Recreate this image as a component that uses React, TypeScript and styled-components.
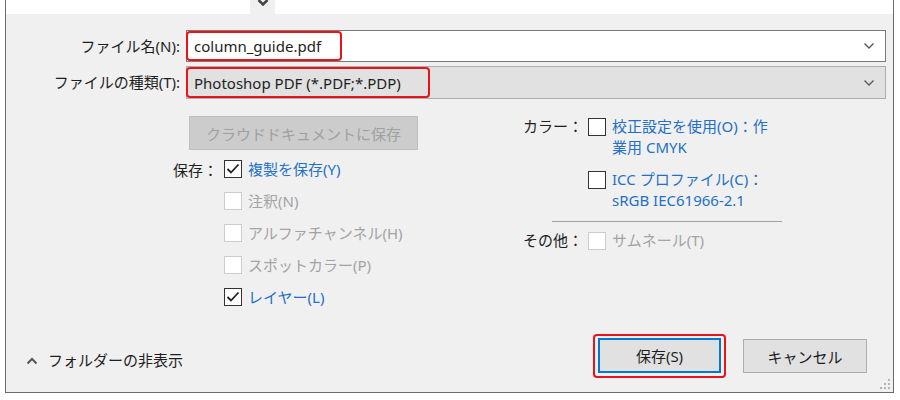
import React from 'react';
import styled, { createGlobalStyle } from 'styled-components';

const GlobalStyle = createGlobalStyle`
    html, body {
        margin: 0;
        padding: 0;
        background: #ffffff;
    }
    body {
        font-family: "Noto Sans", "Noto Sans CJK JP", sans-serif;
        font-size: 15px;
        color: #1e1e1e;
    }
`;

const Window = styled.div`
    position: relative;
    box-sizing: border-box;
    display: flex;
    flex-direction: column;
    margin-left: 5px;
    width: 889px;
    height: 393px;
    background: #f0f0f0;
    border: 1px solid #6a6a6a;
    border-top: none;
`;

const TopStrip = styled.div`
    display: flex;
    height: 14px;
`;

const WhitePane = styled.div<{ $width?: number }>`
    background: #ffffff;
    ${(p) => (p.$width ? `width: ${p.$width}px;` : 'flex: 1;')}
`;

const SortTab = styled.div`
    width: 25px;
    display: flex;
    justify-content: center;
    background: #f0f0f0;
`;

const FormGrid = styled.div`
    display: grid;
    grid-template-columns: 174px 1fr;
    column-gap: 6px;
    row-gap: 4px;
    margin-top: 16px;
    padding-right: 7px;
`;

const FieldLabel = styled.label`
    display: flex;
    align-items: center;
    justify-content: flex-end;
    line-height: 1;
    white-space: nowrap;
`;

const Combo = styled.div<{ $readonly?: boolean }>`
    position: relative;
    box-sizing: border-box;
    display: flex;
    align-items: center;
    height: ${(p) => (p.$readonly ? 33 : 32)}px;
    padding: 0 10px 0 7px;
    background: ${(p) => (p.$readonly ? '#e1e1e1' : '#ffffff')};
    border: 1px solid ${(p) => (p.$readonly ? '#adadad' : '#7a7a7a')};
    white-space: nowrap;
`;

const ComboText = styled.span`
    flex: 1;
`;

const Highlight = styled.div<{ $width: number }>`
    position: absolute;
    box-sizing: border-box;
    left: -1px;
    top: 0;
    bottom: 0;
    width: ${(p) => p.$width}px;
    border: 2.5px solid #e8141c;
    border-radius: 4px;
    pointer-events: none;
`;

const Options = styled.div`
    display: flex;
    margin-top: 17px;
`;

const LeftColumn = styled.div`
    width: 494px;
    display: flex;
    flex-direction: column;
`;

const CloudButton = styled.button`
    box-sizing: border-box;
    margin-left: 183px;
    width: 229px;
    height: 34px;
    border: 1px solid #bfbfbf;
    background: #cccccc;
    color: #a0a0a0;
    font-family: inherit;
    font-size: 15px;
    padding: 0;
`;

const CheckGrid = styled.div<{ $labelWidth: number }>`
    display: grid;
    grid-template-columns: ${(p) => p.$labelWidth}px auto;
    column-gap: 6px;
    grid-auto-rows: 32px;
    margin-top: 3px;
`;

const GroupLabel = styled.div`
    display: flex;
    align-items: center;
    justify-content: flex-end;
    white-space: nowrap;
`;

const CheckItem = styled.div`
    display: flex;
    align-items: center;
    gap: 6px;
`;

const CheckText = styled.span<{ $disabled?: boolean }>`
    color: ${(p) => (p.$disabled ? '#a3a3a3' : '#2370c6')};
    line-height: 21px;
    white-space: nowrap;
`;

const Box = styled.span<{ $disabled?: boolean }>`
    box-sizing: border-box;
    flex: none;
    width: 18px;
    height: 18px;
    display: inline-flex;
    align-items: center;
    justify-content: center;
    background: #ffffff;
    border: 1px solid ${(p) => (p.$disabled ? '#cccccc' : '#333333')};
`;

const RightColumn = styled.div`
    flex: 1;
    display: flex;
    flex-direction: column;
`;

const RightRow = styled.div<{ $gap?: number }>`
    display: grid;
    grid-template-columns: 83px auto;
    column-gap: 5px;
    margin-top: ${(p) => p.$gap ?? 0}px;
`;

const RightLabel = styled.div`
    text-align: right;
    line-height: 21px;
    white-space: nowrap;
`;

const WrapItem = styled.div`
    display: flex;
    align-items: flex-start;
    gap: 6px;
    & > span:first-child {
        margin-top: 2px;
    }
`;

const Separator = styled.div`
    margin: 10px 0 8px 52px;
    width: 230px;
    height: 1px;
    background: #a0a0a0;
`;

const Footer = styled.div`
    margin-top: auto;
    display: flex;
    align-items: flex-end;
    padding: 0 26px 19px 20px;
`;

const FolderToggle = styled.div`
    display: flex;
    align-items: center;
    gap: 10px;
    line-height: 21px;
    margin-bottom: 2px;
`;

const ButtonGroup = styled.div`
    margin-left: auto;
    display: flex;
    align-items: flex-end;
    gap: 22px;
`;

const DialogButton = styled.button<{ $primary?: boolean }>`
    position: relative;
    box-sizing: border-box;
    width: ${(p) => (p.$primary ? 123 : 124)}px;
    height: ${(p) => (p.$primary ? 35 : 34)}px;
    background: #e1e1e1;
    border: ${(p) => (p.$primary ? '2px solid #0078d7' : '1px solid #adadad')};
    font-family: inherit;
    font-size: 15px;
    color: #1e1e1e;
    padding: 0;
`;

const ButtonHighlight = styled.span`
    position: absolute;
    left: -7px;
    top: -6px;
    right: -7px;
    bottom: -7px;
    border: 2.5px solid #e8141c;
    border-radius: 4px;
`;

const Grip = styled.svg`
    position: absolute;
    right: 2px;
    bottom: 2px;
`;

const Chevron = ({ up }: { up?: boolean }) => (
    <svg width="12" height="8" viewBox="0 0 12 8">
        <polyline
            points={up ? '1.5,6.5 6,2 10.5,6.5' : '1.5,1.5 6,6 10.5,1.5'}
            fill="none"
            stroke="#555"
            strokeWidth={up ? 2 : 1.3}
        />
    </svg>
);

const Tick = () => (
    <svg width="14" height="12" viewBox="0 0 14 12">
        <polyline points="1.5,6 5,9.5 12.5,1.5" fill="none" stroke="#222" strokeWidth="1.8" />
    </svg>
);

const Check = ({ checked, disabled }: { checked?: boolean; disabled?: boolean }) => (
    <Box $disabled={disabled}>{checked && <Tick />}</Box>
);

const saveOptions = [
    { label: '複製を保存(Y)', group: '保存：', checked: true },
    { label: '注釈(N)', disabled: true },
    { label: 'アルファチャンネル(H)', disabled: true },
    { label: 'スポットカラー(P)', disabled: true },
    { label: 'レイヤー(L)', checked: true },
];

const App: React.FC = () => (
    <>
        <GlobalStyle />
        <Window>
            <TopStrip>
                <WhitePane $width={244} />
                <SortTab>
                    <svg width="12" height="8" viewBox="0 0 12 8">
                        <polyline points="1.5,0 6,4.5 10.5,0" fill="none" stroke="#444" strokeWidth="2.6" />
                    </svg>
                </SortTab>
                <WhitePane />
            </TopStrip>

            <FormGrid>
                <FieldLabel>ファイル名(N):</FieldLabel>
                <Combo>
                    <ComboText>column_guide.pdf</ComboText>
                    <Chevron />
                    <Highlight $width={156} />
                </Combo>
                <FieldLabel>ファイルの種類(T):</FieldLabel>
                <Combo $readonly>
                    <ComboText>Photoshop PDF (*.PDF;*.PDP)</ComboText>
                    <Chevron />
                    <Highlight $width={244} />
                </Combo>
            </FormGrid>

            <Options>
                <LeftColumn>
                    <CloudButton disabled>クラウドドキュメントに保存</CloudButton>
                    <CheckGrid $labelWidth={212}>
                        {saveOptions.map((o) => (
                            <React.Fragment key={o.label}>
                                <GroupLabel>{o.group ?? ''}</GroupLabel>
                                <CheckItem>
                                    <Check checked={o.checked} disabled={o.disabled} />
                                    <CheckText $disabled={o.disabled}>{o.label}</CheckText>
                                </CheckItem>
                            </React.Fragment>
                        ))}
                    </CheckGrid>
                </LeftColumn>

                <RightColumn>
                    <RightRow>
                        <RightLabel>カラー：</RightLabel>
                        <WrapItem>
                            <Check />
                            <CheckText>
                                校正設定を使用(O)：作
                                <br />
                                業用 CMYK
                            </CheckText>
                        </WrapItem>
                    </RightRow>
                    <RightRow $gap={11}>
                        <RightLabel />
                        <WrapItem>
                            <Check />
                            <CheckText>
                                ICC プロファイル(C)：
                                <br />
                                sRGB IEC61966-2.1
                            </CheckText>
                        </WrapItem>
                    </RightRow>
                    <Separator />
                    <RightRow>
                        <RightLabel>その他：</RightLabel>
                        <CheckItem>
                            <Check disabled />
                            <CheckText $disabled>サムネール(T)</CheckText>
                        </CheckItem>
                    </RightRow>
                </RightColumn>
            </Options>

            <Footer>
                <FolderToggle>
                    <Chevron up />
                    <span>フォルダーの非表示</span>
                </FolderToggle>
                <ButtonGroup>
                    <DialogButton $primary>
                        保存(S)
                        <ButtonHighlight />
                    </DialogButton>
                    <DialogButton>キャンセル</DialogButton>
                </ButtonGroup>
            </Footer>

            <Grip width="12" height="12" viewBox="0 0 12 12">
                {[
                    [9, 1],
                    [5, 5],
                    [9, 5],
                    [1, 9],
                    [5, 9],
                    [9, 9],
                ].map(([x, y]) => (
                    <rect key={`${x}-${y}`} x={x} y={y} width="2" height="2" fill="#b4b4b4" />
                ))}
            </Grip>
        </Window>
    </>
);

export default App;
